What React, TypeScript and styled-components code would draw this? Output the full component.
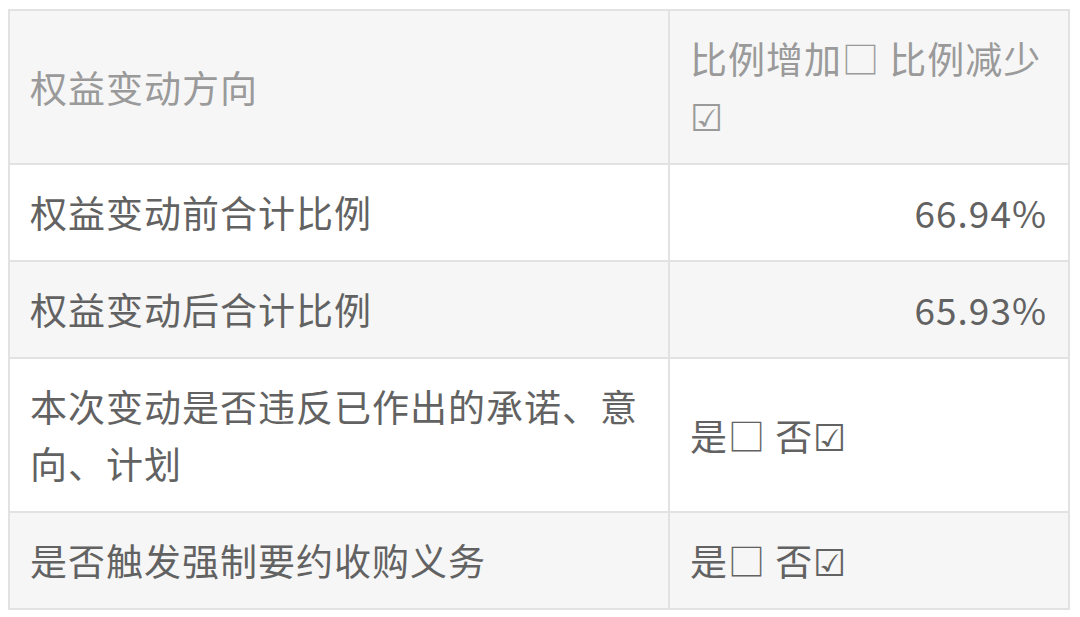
import styled, { createGlobalStyle } from "styled-components";

const GlobalStyle = createGlobalStyle`
  body {
    margin: 0;
    padding: 9px 8px;
    background: #ffffff;
    font-family: "Noto Sans CJK SC", "Noto Sans", sans-serif;
  }
`;

const Table = styled.table`
  width: 1060px;
  border-collapse: collapse;
  table-layout: fixed;
  border: 2px solid #e2e2e2;
`;

const Tr = styled.tr<{ $striped: boolean }>`
  background: ${({ $striped }) => ($striped ? "#f6f6f6" : "#ffffff")};
`;

const Cell = styled.td<{ $header: boolean }>`
  box-sizing: border-box;
  border: 2px solid #e2e2e2;
  padding: 19px 21px 19px 20px;
  font-size: 37px;
  letter-spacing: 1px;
  line-height: 57px;
  vertical-align: middle;
  color: ${({ $header }) => ($header ? "#9a9a9a" : "#626262")};
`;

const ValueCell = styled(Cell)<{ $align: "left" | "right" }>`
  text-align: ${({ $align }) => $align};
`;

const Line = styled.div`
  white-space: nowrap;
`;

type Row = {
  label: string;
  value: React.ReactNode;
  align?: "left" | "right";
};

const rows: Row[] = [
  {
    label: "权益变动方向",
    value: (
      <>
        <Line>比例增加□ 比例减少</Line>
        <Line>☑</Line>
      </>
    ),
  },
  { label: "权益变动前合计比例", value: "66.94%", align: "right" },
  { label: "权益变动后合计比例", value: "65.93%", align: "right" },
  {
    label: "本次变动是否违反已作出的承诺、意向、计划",
    value: "是□ 否☑",
  },
  { label: "是否触发强制要约收购义务", value: "是□ 否☑" },
];

const App = () => {
  return (
    <>
      <GlobalStyle />
      <Table>
        <colgroup>
          <col style={{ width: 660 }} />
          <col style={{ width: 400 }} />
        </colgroup>
        <tbody>
          {rows.map((row, ind) => (
            <Tr key={row.label} $striped={ind % 2 === 0}>
              <Cell $header={ind === 0}>{row.label}</Cell>
              <ValueCell $header={ind === 0} $align={row.align || "left"}>
                {row.value}
              </ValueCell>
            </Tr>
          ))}
        </tbody>
      </Table>
    </>
  );
};

export default App;
